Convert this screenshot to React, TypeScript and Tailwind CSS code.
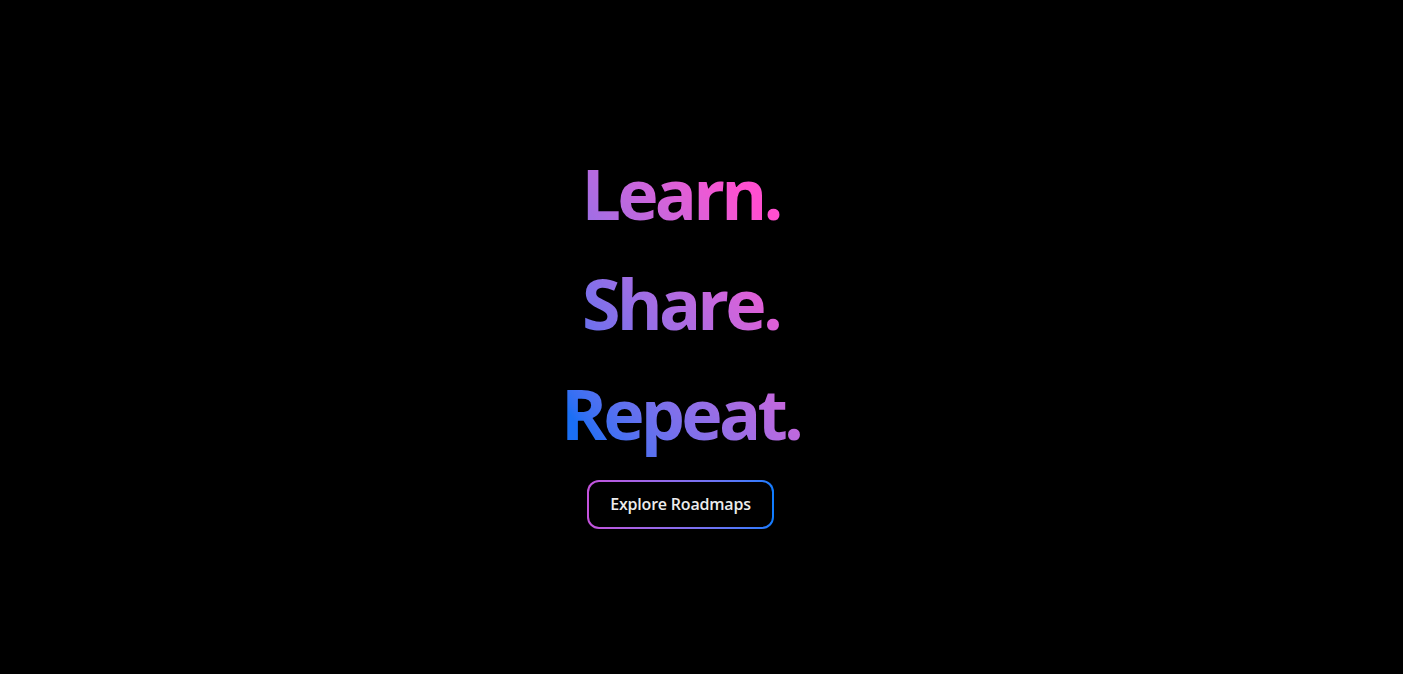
export default function App() {
  return (
    <div className="min-h-screen w-full bg-black flex flex-col items-center justify-center pr-[42px] pb-[8px]" style={{ fontFamily: '"Open Sans", "Noto Sans", sans-serif' }}>
      <h1 className="flex flex-col items-center text-[70px] leading-[110px] font-bold tracking-[-3.8px] bg-gradient-to-tr from-[#1a6ff5] from-10% to-[#ff4fd0] to-80% bg-clip-text text-transparent">
        <span>Learn.</span>
        <span>Share.</span>
        <span>Repeat.</span>
      </h1>
      <div className="mt-3 rounded-xl p-[2px] bg-gradient-to-r from-[#c452dc] to-[#0a7cff]">
        <button className="h-[45px] px-[21px] rounded-[10px] bg-black text-[#ececec] text-[16px] font-semibold tracking-[-0.2px]">
          Explore Roadmaps
        </button>
      </div>
    </div>
  );
}
